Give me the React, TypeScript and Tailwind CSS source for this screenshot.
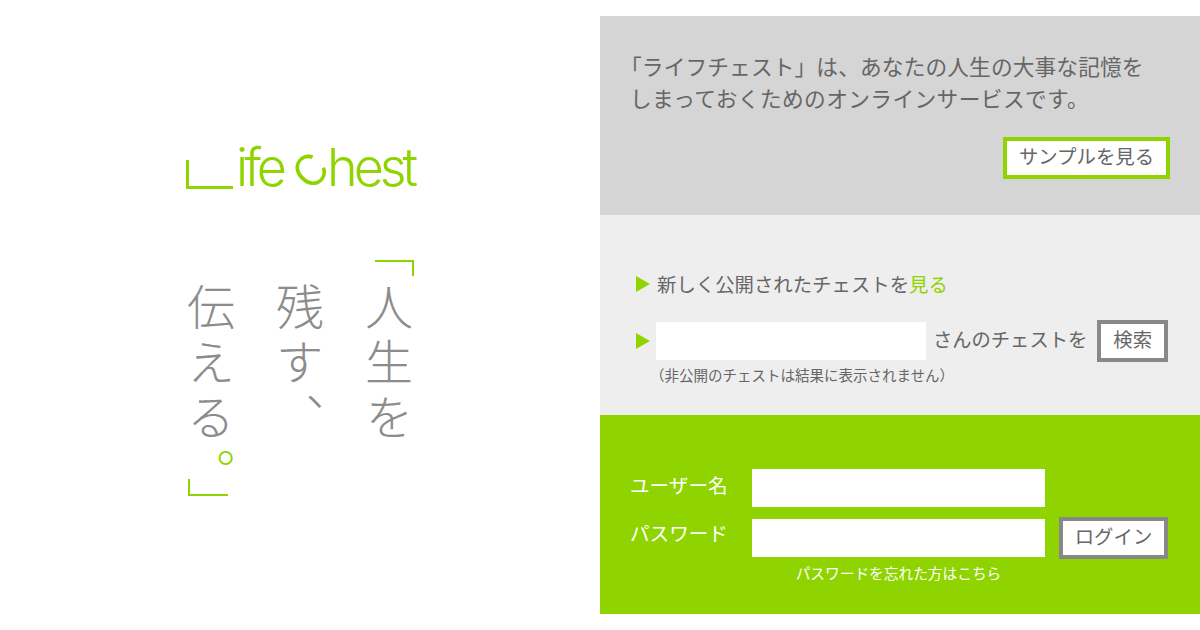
const FONT = "font-['Meiryo','Noto_Sans_CJK_JP','Noto_Sans_CJK_SC',sans-serif]"

function Arrow() {
  return (
    <svg width="14" height="16" viewBox="0 0 14 16" className="shrink-0">
      <path d="M0 0 L14 8 L0 16 Z" fill="#8fd400" />
    </svg>
  )
}

function Logo() {
  return (
    <div className="flex items-end h-[54px] ml-[1px] text-[#8fd400] font-['Inter',sans-serif] font-light text-[52px] leading-[54px] tracking-[-4px] whitespace-nowrap">
      <div className="w-[47px] h-[29px] mb-[1px] shrink-0 border-l-[3px] border-b-[3px] border-[#8fd400]" />
      <span className="ml-[3px] mb-[-5px]">ife</span>
      <span className="inline-block ml-[10px] mb-[-6px] scale-110 rotate-[-45deg]">c</span>
      <span className="ml-[9px] mb-[-5px]">hest</span>
    </div>
  )
}

function Tagline() {
  return (
    <div className="relative w-[230px] h-[236px] mt-[70px]">
      <div className="absolute right-[1px] top-0 w-[39px] h-[16px] border-t-2 border-r-2 border-[#8fd400]" />
      <div className="absolute left-[3px] bottom-0 w-[40px] h-[17px] border-l-2 border-b-2 border-[#8fd400]" />
      <div className="flex flex-row-reverse justify-between pl-[2px] pr-[2px] pt-[23px] text-[48px] leading-[48px] tracking-[7px] text-[#8c8c8c] font-light font-['Noto_Sans_CJK_JP',sans-serif]">
        <span className="w-[48px] [writing-mode:vertical-rl]">人生を</span>
        <span className="w-[48px] [writing-mode:vertical-rl]">残す、</span>
        <span className="w-[48px] [writing-mode:vertical-rl]">
          伝える<span className="text-[#8fd400]">。</span>
        </span>
      </div>
    </div>
  )
}

export default function App() {
  return (
    <div className={`w-[1200px] h-[630px] bg-white flex overflow-hidden ${FONT}`}>
      <div className="w-[600px] flex flex-col items-center pt-[136px]">
        <div className="w-[230px]">
          <Logo />
          <Tagline />
        </div>
      </div>

      <div className="w-[600px] pt-4">
        <section className="h-[199px] bg-[#d5d5d5] pt-[34px] pl-[30px] pr-[30px] text-[#666]">
          <p className="text-[21.7px] leading-[32px] whitespace-nowrap">
            <span className="ml-[-10px] tracking-[0.13px]">「ライフチェスト」は、あなたの人生の大事な記憶を</span>
            <br />
            <span className="tracking-[0.4px]">しまっておくためのオンラインサービスです。</span>
          </p>
          <div className="flex justify-end mt-[23px]">
            <button
              type="button"
              className="w-[167px] h-[42px] pb-[4px] bg-white border-4 border-[#8fd400] text-[19.4px] text-[#666]"
            >
              サンプルを見る
            </button>
          </div>
        </section>

        <section className="h-[200px] bg-[#eeeeee] pt-[56px] pl-[36px] text-[#666]">
          <div className="flex items-center gap-[7px] h-[26px] text-[19.4px]">
            <Arrow />
            <span>
              新しく公開されたチェストを<span className="text-[#8fd400]">見る</span>
            </span>
          </div>
          <div className="flex items-center mt-[23px] h-[42px] text-[19.3px]">
            <Arrow />
            <input className="w-[270px] h-[38px] ml-[6px] bg-white" />
            <span className="ml-[7px] mb-[3px]">さんのチェストを</span>
            <button
              type="button"
              className="w-[71px] h-[42px] ml-[10px] pb-[4px] bg-white border-4 border-[#888] text-[19.4px]"
            >
              検索
            </button>
          </div>
          <p className="mt-[3px] ml-[14px] text-[14.5px] leading-[20px]">
            （非公開のチェストは結果に表示されません）
          </p>
        </section>

        <section className="h-[199px] bg-[#8fd400] pt-[54px] pl-[30px] text-white">
          <div className="flex items-center h-[38px]">
            <span className="w-[122px] text-[19.6px] mb-[7px]">ユーザー名</span>
            <input className="w-[293px] h-[38px] bg-white" />
          </div>
          <div className="flex items-center mt-[10px] h-[42px]">
            <span className="w-[122px] text-[19.6px] mb-[10px]">パスワード</span>
            <input className="w-[293px] h-[38px] bg-white" />
            <button
              type="button"
              className="w-[109px] h-[42px] ml-[14px] pb-[4px] bg-white border-4 border-[#888] text-[19.4px] text-[#666]"
            >
              ログイン
            </button>
          </div>
          <p className="w-[415px] mt-[4px] pl-[122px] text-center text-[14.7px] leading-[20px]">
            パスワードを忘れた方はこちら
          </p>
        </section>
      </div>
    </div>
  )
}
